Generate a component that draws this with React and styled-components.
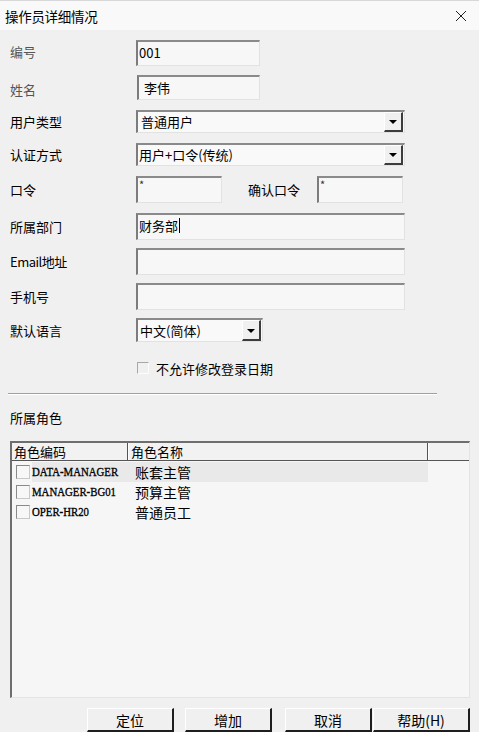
import React from "react";
import styled, { createGlobalStyle } from "styled-components";

const Global = createGlobalStyle`
  html, body { margin: 0; padding: 0; background: #f0f0f0; }
  body { font-family: "Noto Sans CJK SC", "Microsoft YaHei", sans-serif; color: #000; }
  * { box-sizing: border-box; }
`;

const Window = styled.div`
  width: 479px;
  height: 732px;
  display: flex;
  flex-direction: column;
  background: #f0f0f0;
  overflow: hidden;
`;

const TitleBar = styled.div`
  height: 30px;
  flex: none;
  display: flex;
  align-items: center;
  justify-content: space-between;
  padding: 0 12px 0 5px;
  background: #f9f9f9;
  border-top: 1px solid #d8d8d8;
  font-size: 13.5px;
  letter-spacing: -0.3px;
`;

const CloseIcon = styled.svg`
  width: 12px;
  height: 12px;
  display: block;
`;

const Body = styled.div`
  flex: 1;
  display: flex;
  flex-direction: column;
  padding: 10px 0 0 10px;
`;

const Row = styled.div`
  display: flex;
  align-items: center;
  height: ${(p) => p.$h}px;
  margin-bottom: ${(p) => p.$gap || 0}px;
`;

const Label = styled.div`
  width: ${(p) => p.$w || 126}px;
  flex: none;
  font-size: 13px;
  line-height: 16px;
  color: ${(p) => (p.$dim ? "#555" : "#000")};
  letter-spacing: ${(p) => p.$ls || 0}px;
  margin-top: ${(p) => (p.$dy || 0) + 1}px;
`;

const SideLabel = styled(Label)`
  width: auto;
  margin-left: 26px;
  margin-right: 17px;
`;

const Field = styled.div`
  width: ${(p) => p.$w}px;
  height: ${(p) => p.$h}px;
  flex: none;
  display: flex;
  align-items: ${(p) => (p.$top ? "flex-start" : "center")};
  background: #f7f7f7;
  border-style: solid;
  border-width: 2px 1px 1px 2px;
  border-color: #8a8a8a #e2e2e2 #e2e2e2 #7c7c7c;
  padding: 0 0 0 1px;
  font-size: ${(p) => (p.$small ? 11 : 13)}px;
  line-height: ${(p) => (p.$small ? 12 : 16)}px;
  color: ${(p) => (p.$small ? "#333" : "#000")};
  white-space: nowrap;
  margin-left: ${(p) => p.$ml || 0}px;
`;

const FieldText = styled.span`
  padding-left: ${(p) => p.$pl || 0}px;
  margin-top: ${(p) => p.$mt || 0}px;
`;

const Caret = styled.span`
  display: inline-block;
  width: 1px;
  height: 15px;
  background: #000;
  margin-left: 1px;
  margin-top: -3px;
`;

const Select = styled(Field)`
  justify-content: space-between;
  background: #f9f9f9;
  padding: 0 1px 0 1px;
`;

const DropButton = styled.div`
  width: 19px;
  height: 100%;
  flex: none;
  display: flex;
  align-items: center;
  justify-content: center;
  background: #f0f0f0;
  border-style: solid;
  border-width: 1px 2px 2px 1px;
  border-color: #fff #3c3c3c #3c3c3c #fff;
`;

const Arrow = styled.span`
  width: 0;
  height: 0;
  border-left: 4px solid transparent;
  border-right: 4px solid transparent;
  border-top: 4px solid #000;
  margin-top: 1px;
`;

const CheckRow = styled.div`
  display: flex;
  align-items: center;
  height: 16px;
  margin: 0 0 17px 127px;
  font-size: 13px;
`;

const Check = styled.span`
  width: ${(p) => p.$s || 12}px;
  height: ${(p) => p.$s || 12}px;
  flex: none;
  border-style: solid;
  border-width: 1px;
  border-color: ${(p) => (p.$list ? "#8a8a8a #c8c8c8 #c8c8c8 #8a8a8a" : "#a8a8a8 #fdfdfd #fdfdfd #a8a8a8")};
  background: ${(p) => (p.$list ? "#f7f7f7" : "transparent")};
  margin-right: ${(p) => p.$mr || 0}px;
`;

const Separator = styled.div`
  width: 429px;
  margin: 0 0 15px -2px;
  border-top: 1px solid #a0a0a0;
  border-bottom: 1px solid #ffffff;
`;

const SectionLabel = styled.div`
  height: 16px;
  font-size: 13px;
  line-height: 16px;
  margin-bottom: 15px;
`;

const List = styled.div`
  width: 460px;
  height: 257px;
  flex: none;
  display: flex;
  flex-direction: column;
  background: #f6f6f6;
  border-style: solid;
  border-width: 2px 1px 1px 2px;
  border-color: #6e6e6e #e4e4e4 #e4e4e4 #6e6e6e;
`;

const HeaderRow = styled.div`
  display: flex;
  height: 18px;
  flex: none;
  border-bottom: 1px solid #555;
  background: #f2f2f2;
`;

const HeaderCell = styled.div`
  width: ${(p) => p.$w}px;
  flex: ${(p) => (p.$fill ? 1 : "none")};
  border-right: ${(p) => (p.$fill ? "none" : "1px solid #555")};
  box-shadow: ${(p) => (p.$fill ? "none" : "1px 0 0 #fff")};
  font-size: 13px;
  line-height: 17px;
  padding-left: 2px;
  margin-right: ${(p) => (p.$fill ? 0 : 1)}px;
`;

const Rows = styled.div`
  display: flex;
  flex-direction: column;
  padding-top: 1px;
`;

const ListRow = styled.div`
  display: flex;
  align-items: center;
  height: 20px;
  padding-left: 4px;
`;

const Cells = styled.div`
  display: flex;
  align-items: center;
  height: 20px;
  width: 396px;
  background: ${(p) => (p.$hl ? "#e9e9e9" : "transparent")};
`;

const CodeCell = styled.span`
  width: 103px;
  height: 20px;
  flex: none;
  display: flex;
  align-items: center;
  white-space: nowrap;
`;

const Code = styled.span`
  display: block;
  font-family: "Liberation Serif", "DejaVu Serif", serif;
  font-size: 13.5px;
  line-height: 16px;
  -webkit-text-stroke: 0.35px #000;
  transform: scaleX(0.8);
  transform-origin: left center;
`;

const Name = styled.span`
  font-size: 14px;
`;

const ButtonBar = styled.div`
  display: flex;
  margin-top: 10px;
  padding-left: 77px;
`;

const Button = styled.button`
  width: ${(p) => p.$w}px;
  height: 24px;
  margin-left: ${(p) => p.$ml || 0}px;
  padding: 0;
  background: #f0f0f0;
  border-style: solid;
  border-width: 1px 2px 2px 1px;
  border-color: #fff #1e1e1e #1e1e1e #fff;
  font-family: "Noto Sans CJK SC", sans-serif;
  font-size: 14px;
  line-height: 20px;
  color: #000;
`;

const roles = [
  { code: "DATA-MANAGER", name: "账套主管", hl: true },
  { code: "MANAGER-BG01", name: "预算主管" },
  { code: "OPER-HR20", name: "普通员工" },
];

export default function App() {
  return (
    <Window>
      <Global />
      <TitleBar>
        <span>操作员详细情况</span>
        <CloseIcon viewBox="0 0 12 12">
          <path d="M1 1 L11 11 M11 1 L1 11" stroke="#222" strokeWidth="1" fill="none" />
        </CloseIcon>
      </TitleBar>
      <Body>
        <Row $h={26} $gap={9}>
          <Label $dim $dy={-4}>编号</Label>
          <Field $w={124} $h={26}>
            <FieldText $mt={-2}>001</FieldText>
          </Field>
        </Row>
        <Row $h={25} $gap={10}>
          <Label $dim $dy={3}>姓名</Label>
          <Field $w={123} $h={25} $ml={1}>
            <FieldText $pl={4}>李伟</FieldText>
          </Field>
        </Row>
        <Row $h={23} $gap={10}>
          <Label>用户类型</Label>
          <Select $w={269} $h={23}>
            <FieldText $pl={2}>普通用户</FieldText>
            <DropButton><Arrow /></DropButton>
          </Select>
        </Row>
        <Row $h={23} $gap={10}>
          <Label>认证方式</Label>
          <Select $w={269} $h={23}>
            <FieldText>用户+口令(传统)</FieldText>
            <DropButton><Arrow /></DropButton>
          </Select>
        </Row>
        <Row $h={27} $gap={10}>
          <Label>口令</Label>
          <Field $w={86} $h={27} $top $small>*</Field>
          <SideLabel>确认口令</SideLabel>
          <Field $w={86} $h={27} $top $small>*</Field>
        </Row>
        <Row $h={27} $gap={8}>
          <Label>所属部门</Label>
          <Field $w={269} $h={27}>
            <FieldText $mt={-3}>财务部</FieldText>
            <Caret />
          </Field>
        </Row>
        <Row $h={27} $gap={8}>
          <Label $ls={-0.5}>Email地址</Label>
          <Field $w={269} $h={27} />
        </Row>
        <Row $h={27} $gap={8}>
          <Label>手机号</Label>
          <Field $w={269} $h={27} />
        </Row>
        <Row $h={24} $gap={18}>
          <Label>默认语言</Label>
          <Select $w={127} $h={24}>
            <FieldText $pl={1}>中文(简体)</FieldText>
            <DropButton><Arrow /></DropButton>
          </Select>
        </Row>
        <CheckRow>
          <Check $mr={7} />
          <span>不允许修改登录日期</span>
        </CheckRow>
        <Separator />
        <SectionLabel>所属角色</SectionLabel>
        <List>
          <HeaderRow>
            <HeaderCell $w={116}>角色编码</HeaderCell>
            <HeaderCell $w={299}>角色名称</HeaderCell>
            <HeaderCell $fill />
          </HeaderRow>
          <Rows>
            {roles.map((r) => (
              <ListRow key={r.code}>
                <Check $list $s={14} $mr={2} />
                <Cells $hl={r.hl}>
                  <CodeCell><Code>{r.code}</Code></CodeCell>
                  <Name>{r.name}</Name>
                </Cells>
              </ListRow>
            ))}
          </Rows>
        </List>
        <ButtonBar>
          <Button $w={87}>定位</Button>
          <Button $w={87} $ml={11}>增加</Button>
          <Button $w={87} $ml={13}>取消</Button>
          <Button $w={97} $ml={1}>帮助(H)</Button>
        </ButtonBar>
      </Body>
    </Window>
  );
}
